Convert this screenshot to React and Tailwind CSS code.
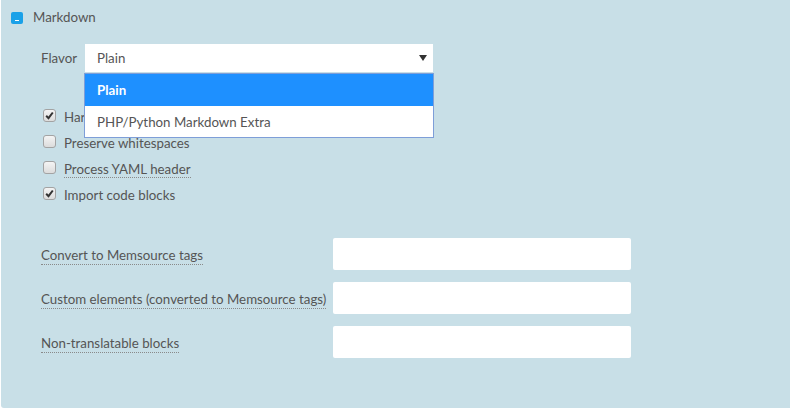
const checks = [
  { label: "Hard line breaks", checked: true },
  { label: "Preserve whitespaces", checked: false },
  { label: "Process YAML header", checked: false, dotted: true },
  { label: "Import code blocks", checked: true },
];

const fields = [
  "Convert to Memsource tags",
  "Custom elements (converted to Memsource tags)",
  "Non-translatable blocks",
];

const Check = ({ checked }) => (
  <span className="flex h-[13px] w-[13px] items-center justify-center rounded-[3px] border border-[#a3a3a3] bg-gradient-to-b from-[#f4f4f4] to-[#dcdcdc]">
    {checked && (
      <svg width="9" height="9" viewBox="0 0 9 9">
        <path d="M1.2 4.8 L3.5 7.2 L7.8 1.5" fill="none" stroke="#333" strokeWidth="2" />
      </svg>
    )}
  </span>
);

export default function App() {
  return (
    <div className="h-[411px] w-[790px] bg-white font-['Lato',sans-serif] text-[13.3px] text-[#555]">
      <div className="ml-px h-[408px] rounded-bl-[3px] bg-[#c8dfe7] pl-[10px] pt-[11px]">
        <div className="flex items-center gap-[10px]">
          <span className="flex h-[12px] w-[12px] items-end justify-center rounded-[2px] bg-[#1aa1e8] pb-[3px]">
            <span className="h-px w-[4px] bg-white" />
          </span>
          <span className="leading-[13px]">Markdown</span>
        </div>

        <div className="relative ml-[30px] mt-[20px] flex items-center">
          <span className="w-[44px] pt-[2px]">Flavor</span>
          <div className="flex h-[28px] w-[348px] items-center justify-between bg-white pl-[12px] pr-[6px]">
            <span className="pt-[2px]">Plain</span>
            <svg width="8" height="6" viewBox="0 0 8 6">
              <path d="M0 0 H8 L4 6 Z" fill="#333" />
            </svg>
          </div>
          <div className="absolute left-[43px] top-[29px] z-10 w-[350px] border border-[#7e9ed8] bg-white">
            <div className="flex h-[32px] items-center bg-[#1e90ff] pl-[12px] pt-[2px] font-bold text-white">Plain</div>
            <div className="flex h-[31px] items-center pl-[12px] pt-[2px]">PHP/Python Markdown Extra</div>
          </div>
        </div>

        <div className="ml-[32px] mt-[37px] flex flex-col gap-[13px]">
          {checks.map((c) => (
            <div key={c.label} className="flex h-[13px] items-center gap-[8px]">
              <Check checked={c.checked} />
              <span
                className={
                  c.dotted
                    ? "border-b border-dotted border-[#8a8a8a] pt-[3px] leading-[16px]"
                    : "pt-[2px] leading-[16px]"
                }
              >
                {c.label}
              </span>
            </div>
          ))}
        </div>

        <div className="ml-[30px] mt-[38px] flex flex-col gap-[12px]">
          {fields.map((f) => (
            <div key={f} className="flex items-center">
              <div className="w-[292px] pt-[4px]">
                <span className="border-b border-dotted border-[#8a8a8a] pb-px leading-[16px]">{f}</span>
              </div>
              <div className="h-[32px] w-[298px] rounded-[2px] bg-white" />
            </div>
          ))}
        </div>
      </div>
    </div>
  );
}
